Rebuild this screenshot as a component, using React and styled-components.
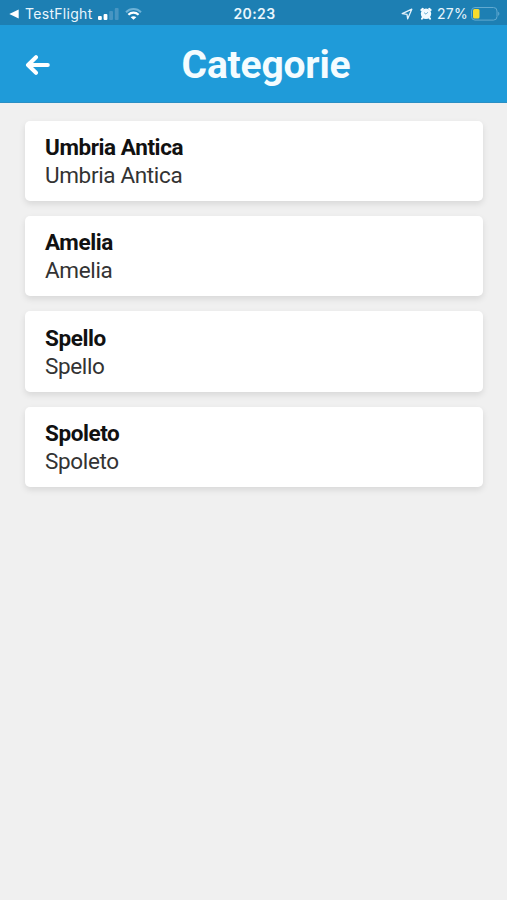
import React from "react";
import styled, { createGlobalStyle } from "styled-components";

const categories = [
  { id: 1, title: "Umbria Antica", text: "Umbria Antica" },
  { id: 2, title: "Amelia", text: "Amelia" },
  { id: 3, title: "Spello", text: "Spello" },
  { id: 4, title: "Spoleto", text: "Spoleto" },
];

const App = () => {
  return (
    <Wrap>
      <GlobalStyle />
      <StatusBar>
        <StatusLeft>
          <svg width="10" height="10" viewBox="0 0 10 10">
            <path d="M0.3 5 L9.7 0.6 V9.4 Z" fill="#fff" />
          </svg>
          <AppName>TestFlight</AppName>
          <Signal width="21" height="12" viewBox="0 0 21 12">
            <rect x="0" y="8" width="3.8" height="4" rx="1" fill="#fff" />
            <rect x="5.6" y="6" width="3.8" height="6" rx="1" fill="#fff" />
            <rect x="11.2" y="3" width="3.8" height="9" rx="1" fill="#4795c2" />
            <rect x="16.8" y="0" width="3.8" height="12" rx="1" fill="#4795c2" />
          </Signal>
          <Wifi width="17" height="12" viewBox="0 0 17 12">
            <path d="M1 4.2 C5.3 0 11.7 0 16 4.2" stroke="#6eb2d7" strokeWidth="2" fill="none" />
            <path d="M3.4 6.8 C6.3 4 10.7 4 13.6 6.8" stroke="#fff" strokeWidth="2.2" fill="none" />
            <path d="M8.5 11.8 L5.7 9.2 C7.3 7.8 9.7 7.8 11.3 9.2 Z" fill="#fff" />
          </Wifi>
        </StatusLeft>
        <Time>20:23</Time>
        <StatusRight>
          <svg width="12" height="12" viewBox="0 0 12 12">
            <path d="M1.2 5.7 L10.8 1.2 L6.7 10.8 L6 6.3 Z" stroke="#e4f2fa" strokeWidth="1.3" strokeLinejoin="round" fill="none" />
          </svg>
          <Alarm width="12" height="13" viewBox="0 0 12 13">
            <circle cx="6" cy="6.8" r="5.2" fill="#f2faff" />
            <path d="M1.4 3 L2.8 1.8 M10.6 3 L9.2 1.8 M2.6 10.8 L2 11.6 M9.4 10.8 L10 11.6" stroke="#f2faff" strokeWidth="2" strokeLinecap="round" />
            <path d="M6 7.2 L4 5.6 M6 7.2 L7.8 5.2" stroke="#5fa8cf" strokeWidth="0.9" />
          </Alarm>
          <Percent>27%</Percent>
          <svg width="29" height="14" viewBox="0 0 29 14">
            <rect x="0.5" y="0.5" width="25.5" height="12.6" rx="3.5" fill="none" stroke="#62aad1" />
            <rect x="2" y="2" width="6.5" height="9.6" rx="1.5" fill="#f8dc2c" />
            <path d="M27.2 4.8 C28.8 5.5 28.8 8.1 27.2 8.8 Z" fill="#62aad1" />
          </svg>
        </StatusRight>
      </StatusBar>
      <Header>
        <BackBtn aria-label="Indietro">
          <svg width="26" height="20" viewBox="0 0 26 20">
            <path d="M11 2.2 L3 10 L11 17.8 M3.4 10 H22.8" fill="none" stroke="#fff" strokeWidth="4" strokeLinecap="round" strokeLinejoin="round" />
          </svg>
        </BackBtn>
        <Title>Categorie</Title>
      </Header>
      <CardList>
        {categories.map((item) => {
          return (
            <Card key={item.id}>
              <CardTitle>{item.title}</CardTitle>
              <CardText>{item.text}</CardText>
            </Card>
          );
        })}
      </CardList>
    </Wrap>
  );
};

const GlobalStyle = createGlobalStyle`
  * {
    box-sizing: border-box;
  }
  body {
    margin: 0;
    background-color: #f0f0f0;
  }
`;

const Wrap = styled.div`
  width: 100%;
  min-height: 100vh;
  background-color: #f0f0f0;
  font-family: Roboto, "Liberation Sans", sans-serif;
`;

const StatusBar = styled.div`
  display: grid;
  grid-template-columns: 1fr auto 1fr;
  align-items: center;
  height: 25px;
  padding: 2px 7px 0 9px;
  background-color: #1d7fb3;
  color: #e9f6fd;
  font-family: Inter, "Liberation Sans", sans-serif;
  font-size: 14px;
  line-height: 20px;
`;
const StatusLeft = styled.div`
  display: flex;
  align-items: center;
`;
const StatusRight = styled.div`
  display: flex;
  align-items: center;
  justify-content: flex-end;
`;
const AppName = styled.div`
  margin-left: 6px;
  letter-spacing: 0.3px;
`;
const Signal = styled.svg`
  margin-left: 5px;
`;
const Wifi = styled.svg`
  margin-left: 6px;
`;
const Alarm = styled.svg`
  margin-left: 7px;
`;
const Time = styled.div`
  font-weight: 600;
  letter-spacing: 0.4px;
`;
const Percent = styled.div`
  margin: 0 3px 0 5px;
  letter-spacing: 0.3px;
`;

const Header = styled.div`
  display: grid;
  grid-template-columns: 60px 1fr 60px;
  align-items: center;
  height: 78.4px;
  padding: 0 12px;
  border-bottom: 1px solid #2a8fc4;
  background-color: #1f9bd9;
`;
const BackBtn = styled.button`
  display: flex;
  padding: 2px 0 0 13px;
  border: none;
  background: none;
  cursor: pointer;
`;
const Title = styled.h1`
  margin: 0 -20px;
  padding: 2px 0 0 25px;
  color: #f4fcff;
  font-size: 39px;
  font-weight: 700;
  line-height: 48px;
  letter-spacing: -0.2px;
  text-align: center;
`;

const CardList = styled.div`
  display: flex;
  flex-direction: column;
  gap: 15px;
  padding: 17.2px 24.5px 17px 25px;
`;
const Card = styled.div`
  height: 80.4px;
  padding: 12.3px 20px;
  border-radius: 5px;
  background-color: #fff;
  box-shadow: 0 3px 6px rgba(0, 0, 0, 0.1);
`;
const CardTitle = styled.div`
  color: #111;
  font-size: 22.5px;
  font-weight: 700;
  line-height: 28px;
  letter-spacing: -0.42px;
`;
const CardText = styled.div`
  color: #333;
  font-size: 22.5px;
  font-weight: 400;
  line-height: 28px;
  letter-spacing: -0.35px;
`;

export default App;
